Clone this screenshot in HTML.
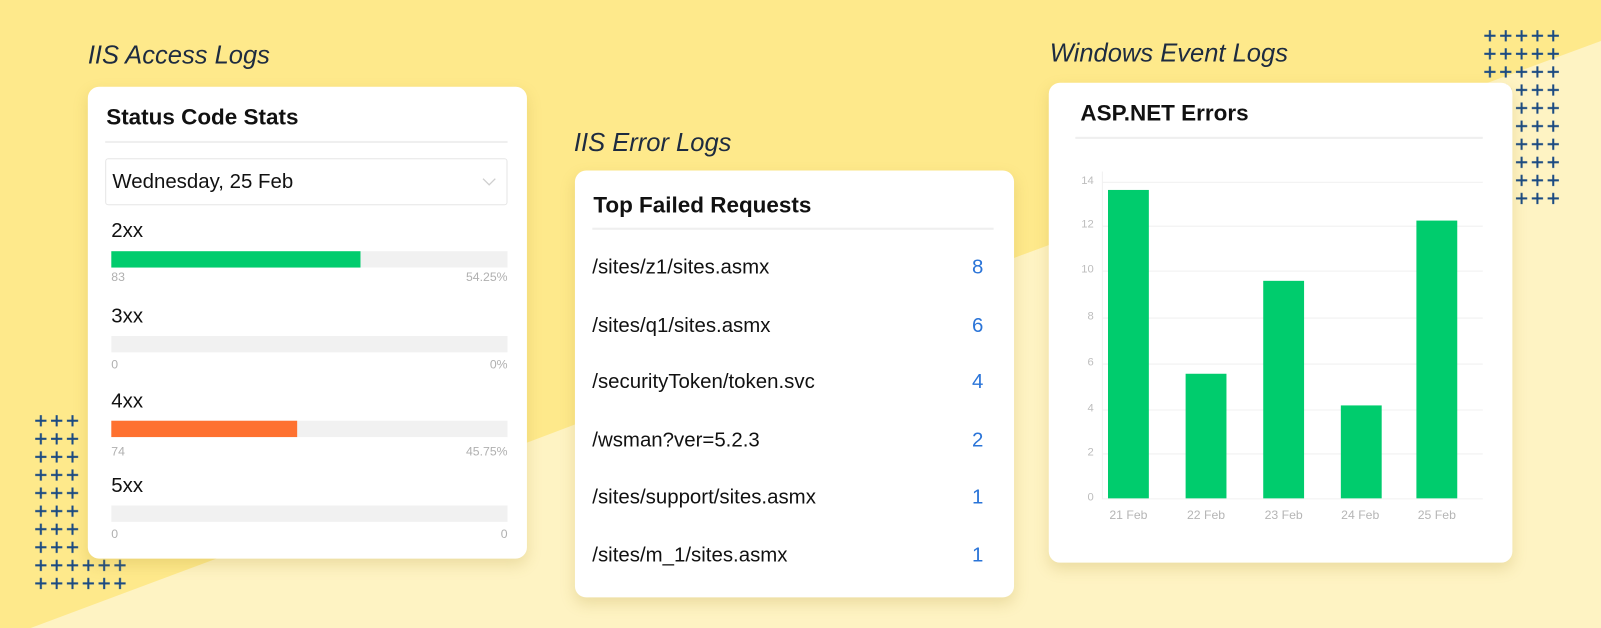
<!DOCTYPE html>
<html><head><meta charset="utf-8"><style>
html,body{margin:0;padding:0;}
body{width:1601px;height:628px;overflow:hidden;position:relative;background:#fee98b;font-family:"Liberation Sans",sans-serif;}
#w{position:absolute;left:0;top:0;width:1568px;height:615px;transform:scale(1.0212);transform-origin:0 0;}
.abs{position:absolute;}
.card{position:absolute;background:#fff;border-radius:11px;box-shadow:0 6px 14px rgba(170,140,40,.22);}
.lbl{position:absolute;font-style:italic;font-size:25px;color:#1d2b40;white-space:nowrap;}
.t{position:absolute;font-weight:bold;font-size:22px;color:#111;white-space:nowrap;}
.hr{position:absolute;height:2px;background:#efefef;}
.code{position:absolute;left:23px;font-size:20px;color:#111;}
.bar{position:absolute;left:23px;width:388px;height:16px;background:#f1f1f1;}
.bar i{position:absolute;left:0;top:0;bottom:0;}
.sm{position:absolute;font-size:12px;color:#b0b0b0;}
.row{position:absolute;left:17px;right:30px;font-size:20px;color:#111;}
.row b{position:absolute;right:0;font-weight:normal;color:#2a74d8;}
.yl{position:absolute;width:20px;text-align:right;font-size:11px;color:#bdbdbd;}
.g{position:absolute;left:1080px;width:372px;height:1px;background:#f0f0f0;}
.bx{position:absolute;width:40px;background:#00cc6d;}
.xl{position:absolute;width:60px;text-align:center;font-size:12px;color:#b5b5b5;}
</style></head><body><div id="w">
<svg class="abs" style="left:0;top:0" width="1568" height="615"><polygon points="30,615 520,432 1000,250 1568,40 1568,615" fill="#fef3c3"/></svg>
<svg class="abs" style="left:0;top:0" width="1568" height="615">
<defs>
<pattern id="p1" x="33" y="405" width="15.5" height="17.7" patternUnits="userSpaceOnUse"><path d="M1.5 7H12.5M7 1.5V12.5" stroke="#1c4b82" stroke-width="2"/></pattern>
<pattern id="p2" x="1452" y="28" width="15.5" height="17.7" patternUnits="userSpaceOnUse"><path d="M1.5 7H12.5M7 1.5V12.5" stroke="#1c4b82" stroke-width="2"/></pattern>
</defs>
<rect x="33" y="405" width="46.5" height="141.6" fill="url(#p1)"/>
<rect x="33" y="546.6" width="93" height="35.4" fill="url(#p1)"/>
<rect x="1452" y="28" width="77.5" height="88.5" fill="url(#p2)"/>
<rect x="1483" y="116.5" width="46.5" height="88.5" fill="url(#p2)"/>
</svg>
<div class="lbl" style="left:86px;top:40px">IIS Access Logs</div>
<div class="lbl" style="left:562px;top:126px">IIS Error Logs</div>
<div class="lbl" style="left:1028px;top:38px">Windows Event Logs</div>

<div class="card" style="left:86px;top:85px;width:430px;height:462px">
<div class="t" style="left:18px;top:17px">Status Code Stats</div>
<div class="hr" style="left:17px;top:53px;width:394px"></div>
<div class="abs" style="left:17px;top:70px;width:392px;height:44px;border:1px solid #e6e6e6;border-radius:3px"><span class="abs" style="left:6px;top:11px;font-size:20px;color:#111">Wednesday, 25 Feb</span><svg class="abs" style="left:368px;top:18px" width="14" height="9"><path d="M1 1L7 7L13 1" fill="none" stroke="#cfcfcf" stroke-width="1.3"/></svg></div>
<div class="code" style="top:130px">2xx</div>
<div class="bar" style="top:161px"><i style="width:244px;background:#00cc6d"></i></div>
<div class="sm" style="left:23px;top:179px">83</div><div class="sm" style="right:19px;top:179px">54.25%</div>
<div class="code" style="top:214px">3xx</div>
<div class="bar" style="top:244px"></div>
<div class="sm" style="left:23px;top:265px">0</div><div class="sm" style="right:19px;top:265px">0%</div>
<div class="code" style="top:297px">4xx</div>
<div class="bar" style="top:327px"><i style="width:182px;background:#fe7130"></i></div>
<div class="sm" style="left:23px;top:350px">74</div><div class="sm" style="right:19px;top:350px">45.75%</div>
<div class="code" style="top:380px">5xx</div>
<div class="bar" style="top:410px"></div>
<div class="sm" style="left:23px;top:431px">0</div><div class="sm" style="right:19px;top:431px">0</div>
</div>

<div class="card" style="left:563px;top:167px;width:430px;height:418px">
<div class="t" style="left:18px;top:21px">Top Failed Requests</div>
<div class="hr" style="left:17px;top:56px;width:393px"></div>
<div class="row" style="top:84px">/sites/z1/sites.asmx<b>8</b></div>
<div class="row" style="top:141px">/sites/q1/sites.asmx<b>6</b></div>
<div class="row" style="top:196px">/securityToken/token.svc<b>4</b></div>
<div class="row" style="top:253px">/wsman?ver=5.2.3<b>2</b></div>
<div class="row" style="top:309px">/sites/support/sites.asmx<b>1</b></div>
<div class="row" style="top:366px">/sites/m_1/sites.asmx<b>1</b></div>
</div>

<div class="card" style="left:1027px;top:81px;width:454px;height:470px"></div>
<div class="t" style="left:1058px;top:98px">ASP.NET Errors</div>
<div class="hr" style="left:1053px;top:134px;width:399px"></div>
<div class="abs" style="left:1079px;top:168px;width:1px;height:321px;background:#f0f0f0"></div>
<div class="g" style="top:178px"></div><div class="g" style="top:221px"></div><div class="g" style="top:265px"></div><div class="g" style="top:311px"></div><div class="g" style="top:356px"></div><div class="g" style="top:401px"></div><div class="g" style="top:444px"></div><div class="g" style="top:488px"></div>
<div class="yl" style="left:1051px;top:171px">14</div><div class="yl" style="left:1051px;top:214px">12</div><div class="yl" style="left:1051px;top:258px">10</div><div class="yl" style="left:1051px;top:304px">8</div><div class="yl" style="left:1051px;top:349px">6</div><div class="yl" style="left:1051px;top:394px">4</div><div class="yl" style="left:1051px;top:437px">2</div><div class="yl" style="left:1051px;top:481px">0</div>
<div class="bx" style="left:1085px;top:186px;height:302px"></div>
<div class="bx" style="left:1161px;top:366px;height:122px"></div>
<div class="bx" style="left:1237px;top:275px;height:213px"></div>
<div class="bx" style="left:1313px;top:397px;height:91px"></div>
<div class="bx" style="left:1387px;top:216px;height:272px"></div>
<div class="xl" style="left:1075px;top:497px">21 Feb</div><div class="xl" style="left:1151px;top:497px">22 Feb</div><div class="xl" style="left:1227px;top:497px">23 Feb</div><div class="xl" style="left:1302px;top:497px">24 Feb</div><div class="xl" style="left:1377px;top:497px">25 Feb</div>
</div></body></html>
